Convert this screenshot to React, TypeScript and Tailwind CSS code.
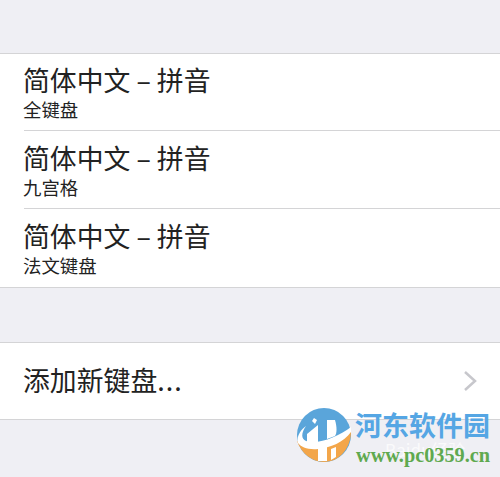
const font = { fontFamily: '"Noto Sans CJK SC", "Liberation Sans", sans-serif' };

function Row({ sub, tall = true, last }: { sub: string; tall?: boolean; last?: boolean }) {
  return (
    <div className={`pl-6 ${tall ? "h-[78px]" : "h-[77px]"}`}>
      <div className={`h-full flex flex-col gap-[4px] ${tall ? "pt-[12px]" : "pt-[11px]"} ${last ? "" : "border-b border-[#d4d4d6]"}`}>
        <div className="text-[26.85px] leading-[30px] text-[#222] whitespace-nowrap -ml-px">简体中文 – 拼音</div>
        <div className="text-[18.4px] leading-[20px] text-[#222] -ml-px">{sub}</div>
      </div>
    </div>
  );
}

function Logo() {
  return (
    <div className="absolute left-[294px] top-[405px] w-[206px] h-[66px] flex gap-[3px]">
      <svg className="shrink-0" width="58" height="60" viewBox="0 0 58 60">
        <circle cx="30" cy="30" r="27" fill="#5aa5da" />
        <path d="M3 36 C12 44 36 42 47 34 C52 30 55 27 57 24 C58 42 46 57 30 57 C18 57 7 48 3 36Z" fill="#f3a64a" />
        <path d="M4 38 C2 30 8 24 12 21 C7 28 7 34 12 36 C24 40 44 32 57 22 L57 27 C50 37 36 43 24 44 C14 45 7 42 4 38Z" fill="#fff" />
        <path d="M13 37 L13 29 L24 20 L24 38Z" fill="#fff" />
        <path d="M33 15 L41 15 C43 22 43 28 41 31 L33 34Z" fill="#fff" />
        <path d="M24 42 L33 41 L33 56 L24 56Z" fill="#fff" />
        <path d="M37 44 L42 42 L42 52 L37 55Z" fill="#fff" />
        <path d="M20 13 L23 15 L21 19 L18 16Z" fill="#fff" />
      </svg>
      <div className="flex flex-col items-start">
        <div className="text-[27px] leading-[34px] mt-[3px] font-bold text-[#55a6e4] whitespace-nowrap">河东软件园</div>
        <div className="relative mt-[2px] pl-px">
          <div className="absolute left-[30px] -top-[4px] text-[17px] leading-[20px] text-white/70 whitespace-nowrap">Baidu经验</div>
          <div className="relative text-[20.3px] leading-[22px] font-bold text-[#5fa94f] whitespace-nowrap" style={{ fontFamily: '"Liberation Serif", serif' }}>www.pc0359.cn</div>
        </div>
      </div>
    </div>
  );
}

export default function App() {
  return (
    <div className="relative w-[500px] h-[477px] overflow-hidden bg-[#efeff4]" style={font}>
      <div className="pt-[53px] flex flex-col gap-[54px]">
        <div className="bg-white border-y border-[#d4d4d6]">
          <Row sub="全键盘" tall={false} />
          <Row sub="九宫格" />
          <Row sub="法文键盘" last />
        </div>
        <div className="bg-white border-y border-[#d4d4d6] h-[78px] pl-6 pr-[23px] pb-[2px] flex items-center justify-between">
          <div className="text-[26.85px] leading-[30px] text-[#222] whitespace-nowrap -ml-px">添加新键盘<span className="tracking-[1px]">...</span></div>
          <svg width="14" height="22" viewBox="0 0 14 22" fill="none" stroke="#c7c7cc" strokeWidth="2.5" className="mt-[2px]">
            <path d="M2 2 L12 11 L2 20" />
          </svg>
        </div>
      </div>
      <Logo />
    </div>
  );
}
